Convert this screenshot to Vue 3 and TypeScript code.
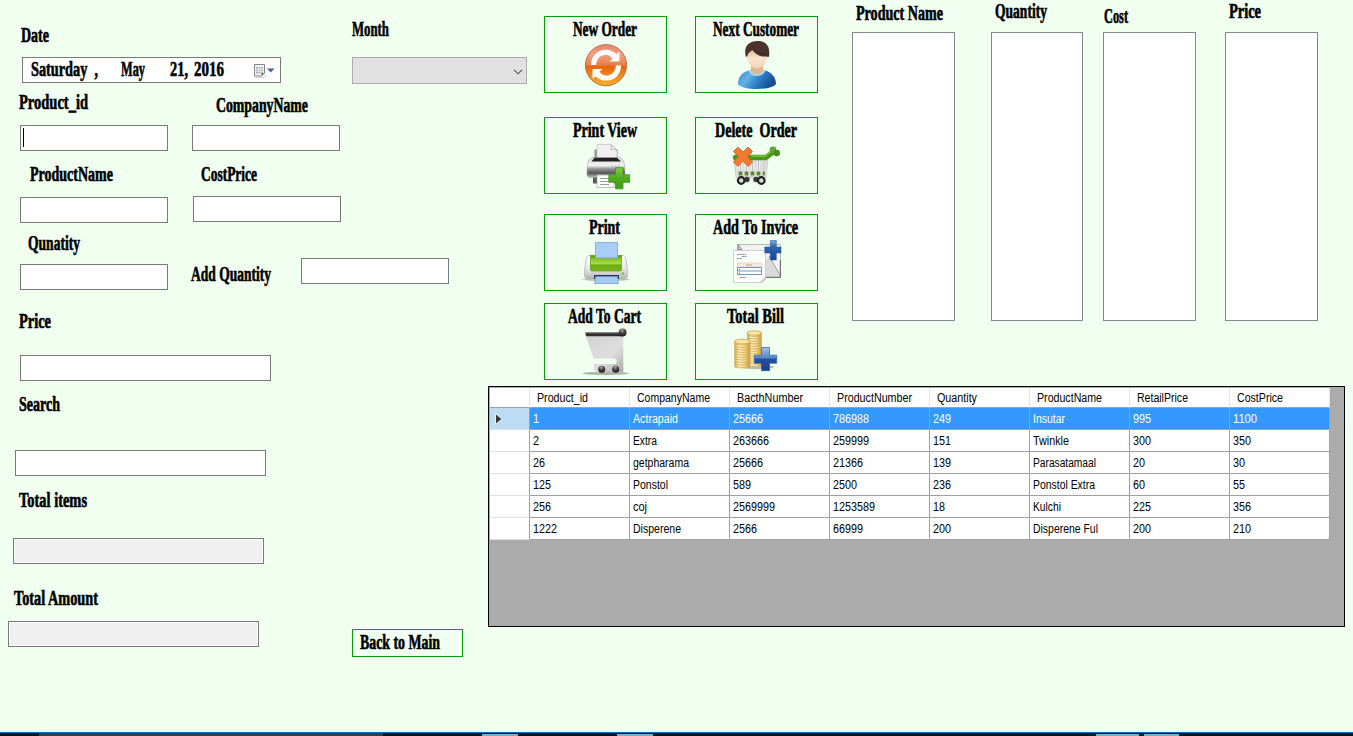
<script setup lang="ts">
import { h, type FunctionalComponent } from 'vue'

const FitText: FunctionalComponent<{ text: string; w: number; height?: number; base?: number }> = (p) =>
  h('svg', { width: p.w, height: p.height ?? 22 }, [
    h('text', { x: 0, y: p.base ?? 17, textLength: p.w, lengthAdjust: 'spacingAndGlyphs' }, p.text),
  ])
FitText.props = ['text', 'w', 'height', 'base']

interface Action { id: string; label: string; w: number }
const actions: Action[] = [
  { id: 'refresh', label: 'New Order', w: 64 },
  { id: 'person', label: 'Next Customer', w: 86 },
  { id: 'preview', label: 'Print View', w: 64 },
  { id: 'delete', label: 'Delete\u00a0 Order', w: 82 },
  { id: 'print', label: 'Print', w: 31 },
  { id: 'invoice', label: 'Add To Invice', w: 85 },
  { id: 'cart', label: 'Add To Cart', w: 73 },
  { id: 'bill', label: 'Total Bill', w: 57 },
]

const lists = [
  { id: 'name', label: 'Product Name', w: 87 },
  { id: 'qty', label: 'Quantity', w: 52 },
  { id: 'cost', label: 'Cost', w: 24 },
  { id: 'price', label: 'Price', w: 32 },
]

const columns: [string, number][] = [
  ['Product_id', 51], ['CompanyName', 73], ['BacthNumber', 66], ['ProductNumber', 75],
  ['Quantity', 40], ['ProductName', 65], ['RetailPrice', 51], ['CostPrice', 46],
]
const rows: string[][] = [
  ['1', 'Actrapaid', '25666', '786988', '249', 'Insutar', '995', '1100'],
  ['2', 'Extra', '263666', '259999', '151', 'Twinkle', '300', '350'],
  ['26', 'getpharama', '25666', '21366', '139', 'Parasatamaal', '20', '30'],
  ['125', 'Ponstol', '589', '2500', '236', 'Ponstol Extra', '60', '55'],
  ['256', 'coj', '2569999', '1253589', '18', 'Kulchi', '225', '356'],
  ['1222', 'Disperene', '2566', '66999', '200', 'Disperene Ful', '200', '210'],
]
const wordWidths: Record<string, number> = {
  Actrapaid: 45, Extra: 24, getpharama: 56, Ponstol: 35, coj: 14, Disperene: 48,
  Insutar: 32, Twinkle: 36, Parasatamaal: 63, 'Ponstol Extra': 62, Kulchi: 28, 'Disperene Ful': 65,
}
const cellWidth = (t: string): number => wordWidths[t] ?? t.length * 6
const coinsLeft = [16, 18.5, 21, 23.5, 26, 28.5, 31, 33.5, 36, 38.5]
const coinsRight = [7.5, 10, 12.5, 15, 17.5, 20, 22.5, 25, 27.5, 30, 32.5, 35]
</script>

<template>
  <main class="form">
    <section class="upper">
      <div class="entry">
        <div class="line line-date">
          <div class="field date">
            <FitText class="cap" text="Date" :w="28" />
            <div class="box datebox">
              <FitText class="cap" text="Saturday&#160; ," :w="67" />
              <FitText class="cap month-part" text="May" :w="24" />
              <FitText class="cap day-part" text="21," :w="18" />
              <FitText class="cap year-part" text="2016" :w="30" />
              <svg class="cal" width="22" height="14">
                <path d="M1 13.300h9l2.500-2.500" fill="none" stroke="#c9c9cc" />
                <path d="M.5 .5h10v8.500l-3 3h-7z" fill="#f4f4f6" stroke="#85838a" />
                <path d="M2 3h7v6.500H2z" fill="#a9adb8" />
                <path d="M2 5h7M2 7.200h7M4.300 3v6.500M6.700 3v6.500" stroke="#fff" stroke-width=".7" />
                <path d="M7.500 12V9h3z" fill="#77757c" />
                <path d="M13 4.500h7.500l-3.750 4z" fill="#45619d" />
              </svg>
            </div>
          </div>
          <div class="field month">
            <FitText class="cap" text="Month" :w="37" />
            <div class="select">
              <svg width="10" height="6"><path d="M1 .8l4 4 4-4" fill="none" stroke="#505050" stroke-width="1.1" /></svg>
            </div>
          </div>
        </div>
        <div class="line line-id">
          <div class="field pid">
            <FitText class="cap" text="Product_id" :w="69" />
            <div class="box short"><i class="caret"></i></div>
          </div>
          <div class="field company">
            <FitText class="cap" text="CompanyName" :w="92" />
            <div class="box short"></div>
          </div>
        </div>
        <div class="line line-name">
          <div class="field pname">
            <FitText class="cap" text="ProductName" :w="83" />
            <div class="box short"></div>
          </div>
          <div class="field cprice">
            <FitText class="cap" text="CostPrice" :w="56" />
            <div class="box short"></div>
          </div>
        </div>
        <div class="line line-qty">
          <div class="field qty">
            <FitText class="cap" text="Qunatity" :w="52" />
            <div class="box short"></div>
          </div>
          <FitText class="cap addq" text="Add Quantity" :w="80" />
          <div class="box short addbox"></div>
        </div>
        <div class="field price">
          <FitText class="cap" text="Price" :w="32" />
          <div class="box long"></div>
        </div>
      </div>

      <div class="actions">
        <button v-for="a in actions" :key="a.id" type="button" class="action">
          <FitText class="cap" :text="a.label" :w="a.w" />
          <svg class="icon" viewBox="0 0 48 48" width="48" height="48">
            <template v-if="a.id === 'refresh'">
              <defs>
                <linearGradient id="orb" x1="0" y1="0" x2="0" y2="1">
                  <stop offset="0" stop-color="#ea8468" /><stop offset=".25" stop-color="#f0a083" />
                  <stop offset=".48" stop-color="#ec8148" /><stop offset=".54" stop-color="#e8640f" />
                  <stop offset="1" stop-color="#f7b32c" />
                </linearGradient>
              </defs>
              <circle cx="24" cy="24.200" r="20.600" fill="url(#orb)" stroke="#b9764c" />
              <path v-for="turn in [0, 180]" :key="turn" :transform="`rotate(${turn} 24 24.200)`" fill="#fff"
                d="M9 24C9 14.500 16 8.800 24 8.800c4.200 0 7.800 1.600 10.300 4.200L37.500 11v9.500h-10l3-2.600C29 15.500 26.500 13.800 24 13.800c-5.200 0-9.600 4-9.800 10.200z" />
            </template>
            <template v-else-if="a.id === 'person'">
              <defs>
                <linearGradient id="shirt" x1="0" y1="0" x2="1" y2=".35">
                  <stop offset="0" stop-color="#3d86c4" /><stop offset=".35" stop-color="#63b2e6" />
                  <stop offset=".65" stop-color="#2f7fc4" /><stop offset="1" stop-color="#164f94" />
                </linearGradient>
                <linearGradient id="skin" x1="0" y1="0" x2="0" y2="1">
                  <stop offset="0" stop-color="#cf9c70" /><stop offset=".6" stop-color="#fbe4cd" />
                  <stop offset="1" stop-color="#f3d2b3" />
                </linearGradient>
              </defs>
              <path d="M5 43c0-7 4-12 12-14h14c8 2 12 8 12 14-2 3-10 5-19 5S6 46 5 43z" fill="url(#shirt)" />
              <path d="M15.500 29.500c4-2 13-2 17 0-2 4.500-4.500 5.500-8.500 5.500s-6.500-1-8.500-5.500z" fill="#a9d8f0" />
              <path d="M18 22h12v8c-2 4-10 4-12 0z" fill="#e2b58e" />
              <path d="M12.800 11c0-6 5-9 11.200-9s11.200 4 11.200 10c0 8-5 15.500-11.200 15.500S12.800 19 12.800 11z" fill="url(#skin)" />
              <path d="M12.800 15.500C10.500 6 15 0 24.500 0 33 0 37.500 5 36 15.500c-1 .8-1.500.5-2.500 0-5.500.5-11-1.500-14-6.500-1.500 1.500-4.500 2.500-5.200 6.500z" fill="#4b332c" />
              <path d="M19 5c3 5 8 8 14 9" fill="none" stroke="#33211d" stroke-width=".8" />
            </template>
            <template v-else-if="a.id === 'preview'">
              <defs>
                <linearGradient id="body" x1="0" y1="0" x2="0" y2="1">
                  <stop offset="0" stop-color="#d9d9d9" /><stop offset=".4" stop-color="#f2f2f2" />
                  <stop offset=".55" stop-color="#9d9d9d" /><stop offset=".78" stop-color="#555" />
                  <stop offset="1" stop-color="#c4c4c4" />
                </linearGradient>
                <linearGradient id="leaf" x1="0" y1="0" x2="0" y2="1">
                  <stop offset="0" stop-color="#86cf43" /><stop offset=".5" stop-color="#4fab1f" /><stop offset="1" stop-color="#3f9714" />
                </linearGradient>
              </defs>
              <path d="M12.500 7.500h23v9h-23z" fill="#929292" />
              <path d="M15 2.500h14l6 6V17H15z" fill="#f0f0f0" stroke="#c3c3c3" stroke-width=".7" />
              <path d="M29 2.500c1.500 2 .5 4-.5 5 2-.5 4.500-.5 6.500 1z" fill="#fff" stroke="#a0a0a0" stroke-width=".7" />
              <path d="M11 34h26v7.500H11z" fill="#5a5a5a" />
              <path d="M10 15.500h28l3.500 3c1 3 1.500 8 1.500 14 0 2-1 3-3 3H8c-2 0-3-1-3-3 0-6 .5-11 1.500-14z" fill="url(#body)" stroke="#999" stroke-width=".5" />
              <path d="M9.500 19.500l3-3.800h22.500l4 3.800z" fill="#202020" />
              <path d="M29 24h2m1.500 0h2m1.500 0h2" stroke="#aaa" />
              <path d="M15 33h17v12.500H15z" fill="#fafafa" stroke="#aaa" stroke-width=".7" />
              <path d="M18 36.500h9M18 39.500h11M18 42.500h9" stroke="#9b9b9b" />
              <path d="M33.500 25.800h7.500v7h6.700v7.500H41v6.500h-7.500v-6.500h-6.700v-7.500h6.700z" fill="url(#leaf)" stroke="#418f20" stroke-width=".8" />
            </template>
            <template v-else-if="a.id === 'delete'">
              <path d="M1.500 18L3 34.500h30L34.700 18z" fill="#eee" stroke="#c8c8c8" />
              <path d="M4 29.500h28v4H4z" fill="#568a27" />
              <path d="M4.500 18v17M10.500 18v17M16.500 18v17M22.500 18v17M28.500 18v17M33 18v17" stroke="#dcdce0" stroke-width="2.400" />
              <path d="M7.500 19v11M13.500 19v11M19.500 19v11M25.500 19v11M31 19v11" stroke="#a3aaa4" stroke-width=".7" />
              <path d="M2.500 15.500h30.500l7-5.500" fill="none" stroke="#4b9518" stroke-width="5.400" stroke-linecap="round" stroke-linejoin="round" />
              <path d="M18 14.200h14l7-5.500" fill="none" stroke="#8ac74d" stroke-width="1.300" />
              <circle cx="40" cy="7.800" r="3.300" fill="#60a52d" /><circle cx="43.800" cy="11" r="3.200" fill="#448d1b" />
              <path d="M2.500 35.500h31" stroke="#d4d4d4" stroke-width="2" />
              <circle cx="14" cy="37.500" r="2.700" fill="#3a3a3a" /><circle cx="23" cy="37.500" r="2.700" fill="#3a3a3a" />
              <circle cx="8.200" cy="38.500" r="3.300" fill="#ddd" stroke="#202020" stroke-width="2.200" />
              <circle cx="28.300" cy="38.500" r="3.300" fill="#ddd" stroke="#202020" stroke-width="2.200" />
              <path d="M4.800 5.200L10 10l5.200-4.800 4.300 4.300-5 5.200 5 5.300-4.300 4.300-5.200-5-5.200 5L.5 20l5-5.300-5-5.200z" fill="#f17a31" stroke="#d76527" stroke-width="1" stroke-linejoin="round" />
            </template>
            <template v-else-if="a.id === 'print'">
              <defs>
                <linearGradient id="lime" x1="0" y1="0" x2="0" y2="1">
                  <stop offset="0" stop-color="#5d9a10" /><stop offset=".3" stop-color="#91cc2d" />
                  <stop offset=".55" stop-color="#add957" /><stop offset=".6" stop-color="#6cab14" /><stop offset="1" stop-color="#76b51d" />
                </linearGradient>
                <linearGradient id="shell" x1="0" y1="0" x2="0" y2="1">
                  <stop offset="0" stop-color="#fff" /><stop offset=".6" stop-color="#e4e4e4" /><stop offset="1" stop-color="#b3b3b3" />
                </linearGradient>
              </defs>
              <ellipse cx="24" cy="40.500" rx="24" ry="1.600" fill="#c3cdc1" />
              <path d="M7 16.500h34c3 0 3.500 6 4.500 17 .3 5-1 6.500-3.500 6.500H6c-2.500 0-3.800-1.500-3.500-6.500 1-11 1.500-17 4.500-17z" fill="url(#shell)" stroke="#aaa" stroke-width=".7" />
              <path d="M8.500 16.500h31v14q0 1.500-1.500 1.500H10q-1.500 0-1.500-1.500z" fill="url(#lime)" stroke="#609b18" stroke-width=".7" />
              <path d="M13.500 3.500h22V19h-22z" fill="#a9cdf7" stroke="#78a5df" stroke-width=".8" />
              <path d="M12 36h25v4H12z" fill="#263951" />
              <path d="M13.500 37.500h22l.8 7H12.700z" fill="#a5c9f5" stroke="#7193c1" stroke-width=".7" />
              <circle cx="40.800" cy="34.500" r="1.200" fill="#7dbb29" />
            </template>
            <template v-else-if="a.id === 'invoice'">
              <defs>
                <linearGradient id="cross" x1="0" y1="0" x2="0" y2="1">
                  <stop offset="0" stop-color="#7eb1e5" /><stop offset=".3" stop-color="#2d68b1" /><stop offset="1" stop-color="#17458f" />
                </linearGradient>
              </defs>
              <path d="M4.500 5.500h43v33h-43z" fill="#f2f2f2" stroke="#aaa" stroke-width=".8" />
              <path d="M30 26l6-9 11.500 21H30z" fill="#dadada" /><path d="M36 17l11.500 20" stroke="#888" stroke-width=".8" />
              <path d="M47.300 21v17.300H32" fill="none" stroke="#666" />
              <path d="M5 5.500l4 5H5z" fill="#ccc" stroke="#777" stroke-width=".7" />
              <path d="M.5 11.500h32v29l-3 3H.5z" fill="#fcfcfc" stroke="#c5c5c5" stroke-width=".8" />
              <path d="M26 43.500l6.500-6v3l-3 3z" fill="#d0d0d0" />
              <path d="M4 15.500h9M9 17.500h5M4 19.500h5M7 38.500h6" stroke="#777" stroke-width=".8" stroke-dasharray="2 .5" />
              <path d="M4.500 24h24v4h-24z" fill="#f7e9e0" stroke="#ccb9b0" stroke-width=".5" />
              <path d="M13 26h6" stroke="#c59a86" />
              <path d="M4.500 28.500h24v7h-24zM4.500 32h24" fill="#fff" stroke="#6389ba" stroke-width=".9" />
              <path d="M6 30.500h1M6 34.300h1" stroke="#555" />
              <path d="M37.300 1.500h6V8H48v6h-4.700v7h-6v-7h-5.500V8h5.500z" fill="url(#cross)" stroke="#2d609e" stroke-width=".6" />
            </template>
            <template v-else-if="a.id === 'cart'">
              <defs>
                <linearGradient id="steel" x1="0" y1="0" x2="1" y2="1">
                  <stop offset="0" stop-color="#d2d2d2" /><stop offset=".6" stop-color="#dedede" /><stop offset="1" stop-color="#aaa" />
                </linearGradient>
                <radialGradient id="wheel" cx=".45" cy=".25" r=".7">
                  <stop offset="0" stop-color="#aaa" /><stop offset=".5" stop-color="#4b4444" /><stop offset="1" stop-color="#211c1c" />
                </radialGradient>
              </defs>
              <ellipse cx="23.700" cy="45.400" rx="23" ry="1.500" fill="#a5b2a5" />
              <path d="M4 8h37.300v36H15c-2 0-3-1.500-3-3v-5h21q1.500 0 1.500-1.500v-2.500q0-1.500-1.500-1.500H13q-1.500 0-2-1.500z" fill="url(#steel)" />
              <path d="M3.300 4.500H41v3.800H4z" fill="#322c2d" /><path d="M4 5h34" stroke="#777" stroke-width=".8" />
              <circle cx="40.600" cy="4.500" r="3.900" fill="url(#wheel)" />
              <circle cx="19.700" cy="41.200" r="3.500" fill="url(#wheel)" /><circle cx="33.700" cy="41.200" r="3.500" fill="url(#wheel)" />
            </template>
            <template v-else>
              <defs>
                <linearGradient id="gold" x1="0" y1="0" x2="1" y2="0">
                  <stop offset="0" stop-color="#d3a649" /><stop offset=".3" stop-color="#fff3c4" />
                  <stop offset=".65" stop-color="#f3d98c" /><stop offset="1" stop-color="#c6983c" />
                </linearGradient>
                <linearGradient id="sapphire" x1="0" y1="0" x2="0" y2="1">
                  <stop offset="0" stop-color="#9bc3e7" /><stop offset=".45" stop-color="#5288c5" />
                  <stop offset=".5" stop-color="#2350a0" /><stop offset="1" stop-color="#17418e" />
                </linearGradient>
              </defs>
              <ellipse cx="25" cy="39" rx="16" ry="2.200" fill="#b7bbac" />
              <path d="M14 5c0-3 14.700-3 14.700 0v33H14z" fill="url(#gold)" />
              <path v-for="y in coinsRight" :key="'r' + y" :d="`M14.300 ${y}q7 2 14 0`" fill="none" stroke="#cda04a" stroke-width=".7" />
              <ellipse cx="21.300" cy="5" rx="7.200" ry="2.200" fill="#f9e7a9" stroke="#cfa249" stroke-width=".8" />
              <path d="M1.300 13.500c0-3 16-3 16 0V39c-3 2.500-13 2.500-16 0z" fill="url(#gold)" />
              <path v-for="y in coinsLeft" :key="'l' + y" :d="`M1.600 ${y}q7.700 2.200 15.400 0`" fill="none" stroke="#cda04a" stroke-width=".7" />
              <ellipse cx="9.300" cy="13.500" rx="7.800" ry="2.300" fill="#f9e7a9" stroke="#cfa249" stroke-width=".8" />
              <path d="M28.500 19.500h8v7.700h7.200v8h-7.200v7.500h-8v-7.500h-7.200v-8h7.200z" fill="url(#sapphire)" stroke="#2c5ca3" stroke-width=".7" />
            </template>
          </svg>
        </button>
      </div>

      <div class="lists">
        <div v-for="l in lists" :key="l.id" class="list" :class="l.id">
          <div class="head"><FitText class="cap" :text="l.label" :w="l.w" /></div>
          <div class="listbox"></div>
        </div>
      </div>
    </section>

    <section class="lower">
      <div class="totals">
        <div class="field search">
          <FitText class="cap" text="Search" :w="41" />
          <div class="box long"></div>
        </div>
        <div class="field items">
          <FitText class="cap" text="Total items" :w="68" />
          <div class="box long readonly"></div>
        </div>
        <div class="last">
          <div class="field amount">
            <FitText class="cap" text="Total Amount" :w="84" />
            <div class="box long readonly"></div>
          </div>
          <button type="button" class="back"><FitText class="cap" text="Back to Main" :w="80" /></button>
        </div>
      </div>
      <div class="gridview">
        <div class="row header">
          <div class="cell corner"></div>
          <div v-for="c in columns" :key="c[0]" class="cell">
            <FitText class="txt" :text="c[0]" :w="c[1]" :height="19" :base="14" />
          </div>
        </div>
        <div v-for="(r, i) in rows" :key="i" class="row" :class="{ selected: i === 0 }">
          <div class="cell corner">
            <svg v-if="i === 0" width="8" height="12"><path d="M.5 .5v11L7 6z" fill="#3a3a3a" stroke="#f4f4f4" stroke-width="1" /></svg>
          </div>
          <div v-for="(t, j) in r" :key="j" class="cell">
            <FitText class="txt" :text="t" :w="cellWidth(t)" :height="21" :base="15" />
          </div>
        </div>
      </div>
    </section>

    <footer class="taskbar">
      <i class="searchbar"></i><i class="task t1"></i><i class="task t2"></i><i class="task t3"></i><i class="task t4"></i>
    </footer>
  </main>
</template>

<style>
html, body { margin: 0; overflow: hidden; background: #f0fff0; }
</style>

<style scoped>
.form { width: 1353px; height: 736px; display: flex; flex-direction: column; background: #f0fff0; overflow: hidden; box-sizing: border-box; }
.form * { box-sizing: border-box; }
svg { display: block; flex: none; overflow: visible; }
.cap { font: bold 20px "Liberation Serif", "Times New Roman", serif; fill: #000; stroke: #000; stroke-width: .6px; white-space: pre; }
.txt { font: 12.5px "Liberation Sans", Arial, sans-serif; fill: #000; }

.upper { display: flex; height: 386px; }
.entry { width: 544px; flex: none; display: flex; flex-direction: column; }
.line { display: flex; align-items: flex-start; }
.line-date { height: 92px; }
.line-id { height: 72px; }
.line-name { height: 69px; }
.line-qty { height: 78px; }
.field { display: flex; flex-direction: column; align-items: flex-start; flex: none; }
.box { height: 26px; border: 1px solid #7a7a7a; background: #fff; flex: none; }
.short { width: 148px; }
.long { width: 251px; }
.readonly { background: #f0f0f0; box-shadow: inset 0 0 0 1px #fff; }

.date { padding: 25px 0 0 21px; }
.datebox { width: 259px; margin: 10px 0 0 1px; padding: 1px 0 0 8px; display: flex; }
.month-part { margin-left: 23px; }
.day-part { margin-left: 25px; }
.year-part { margin-left: 6px; }
.cal { margin: 5px 0 0 30px; }
.month { padding: 19px 0 0 71px; }
.select { width: 175px; height: 27px; margin-top: 16px; border: 1px solid #acacac; background: #e1e1e1; display: flex; justify-content: flex-end; padding: 11px 3px 0 0; }

.pid { padding-left: 19px; }
.pid .box { margin: 11px 0 0 1px; padding: 2px 0 0 2px; }
.caret { display: block; width: 1px; height: 19px; background: #000; }
.company { padding: 3px 0 0 24px; }
.company .cap { margin-left: 24px; }
.company .box { margin-top: 8px; }
.pname { padding-left: 20px; }
.pname .cap { margin-left: 10px; }
.pname .box { margin-top: 11px; }
.cprice { padding-left: 25px; }
.cprice .cap { margin-left: 8px; }
.cprice .box { margin-top: 10px; }
.qty { padding-left: 20px; }
.qty .cap { margin-left: 8px; }
.qty .box { margin-top: 9px; }
.addq { margin: 31px 0 0 23px; }
.addbox { margin: 25px 0 0 30px; }
.price { padding-left: 19px; }
.price .box { margin: 22px 0 0 1px; }

.actions { width: 274px; flex: none; padding-top: 16px; display: grid; grid-template-columns: 151px 123px; grid-template-rows: 101px 97px 89px 77px; align-items: start; }
.action { width: 123px; height: 77px; margin: 0; padding: 2px 2px 0 0; border: 1px solid #00a000; background: #f0fff0; display: flex; flex-direction: column; align-items: center; }
.icon { margin: 0 0 0 2px; }

.lists { display: flex; margin-left: 34px; }
.list { display: flex; flex-direction: column; }
.head { height: 32px; flex: none; }
.listbox { height: 289px; border: 1px solid #828790; background: #fff; }
.name { width: 103px; margin-right: 36px; }
.name .head { padding: 3px 0 0 4px; }
.list.qty { width: 92px; margin-right: 20px; padding: 0; }
.list.qty .head { padding: 1px 0 0 4px; }
.list.qty .cap { margin: 0; }
.cost { width: 93px; margin-right: 29px; }
.cost .head { padding: 6px 0 0 1px; }
.list.price { width: 93px; padding: 0; }
.list.price .head { padding: 1px 0 0 4px; }

.lower { display: flex; height: 346px; }
.totals { width: 488px; flex: none; padding-top: 8px; display: flex; flex-direction: column; }
.search { height: 96px; padding-left: 15px; }
.search .cap { margin-left: 4px; }
.search .box { margin-top: 34px; }
.items { height: 98px; padding-left: 13px; }
.items .cap { margin-left: 6px; }
.items .box { margin-top: 26px; }
.last { display: flex; align-items: flex-start; }
.amount { padding-left: 8px; }
.amount .cap { margin-left: 6px; }
.amount .box { margin-top: 11px; }
.back { margin: 41px 0 0 93px; width: 111px; height: 28px; padding: 2px 0 0 7px; border: 1px solid #00a000; background: #f0fff0; display: flex; align-items: flex-start; }

.gridview { width: 857px; height: 241px; flex: none; border: 1px solid #000; background: #ababab; padding: 1px 0 0 1px; }
.row { display: grid; grid-template-columns: 40px repeat(8, 100px); width: 840px; height: 22px; }
.header { height: 20px; }
.cell { background: #fff; border-right: 1px solid #a0a0a0; border-bottom: 1px solid #a0a0a0; padding-left: 3px; overflow: hidden; }
.header .cell { padding-left: 6.5px; border-right-color: #e5e5e5; }
.row .corner { border-bottom-color: #e0e0e0; }
.header .corner { border-bottom-color: #a0a0a0; }
.selected .cell { background: #3399ff; }
.selected .txt { fill: #fff; }
.selected .corner { background: #bcdcf4; padding: 5px 0 0 5px; }

.taskbar { height: 4px; border-top: 1px solid #0f6cb8; background: #04182a; display: flex; align-items: flex-end; }
.searchbar { width: 344px; height: 3px; margin-left: 39px; background: #303f4e; }
.task { height: 2px; background: #86a9c6; }
.t1 { width: 36px; margin-left: 99px; }
.t2 { width: 36px; margin-left: 99px; }
.t3 { width: 43px; margin-left: 443px; }
.t4 { width: 35px; margin-left: 5px; }
</style>
